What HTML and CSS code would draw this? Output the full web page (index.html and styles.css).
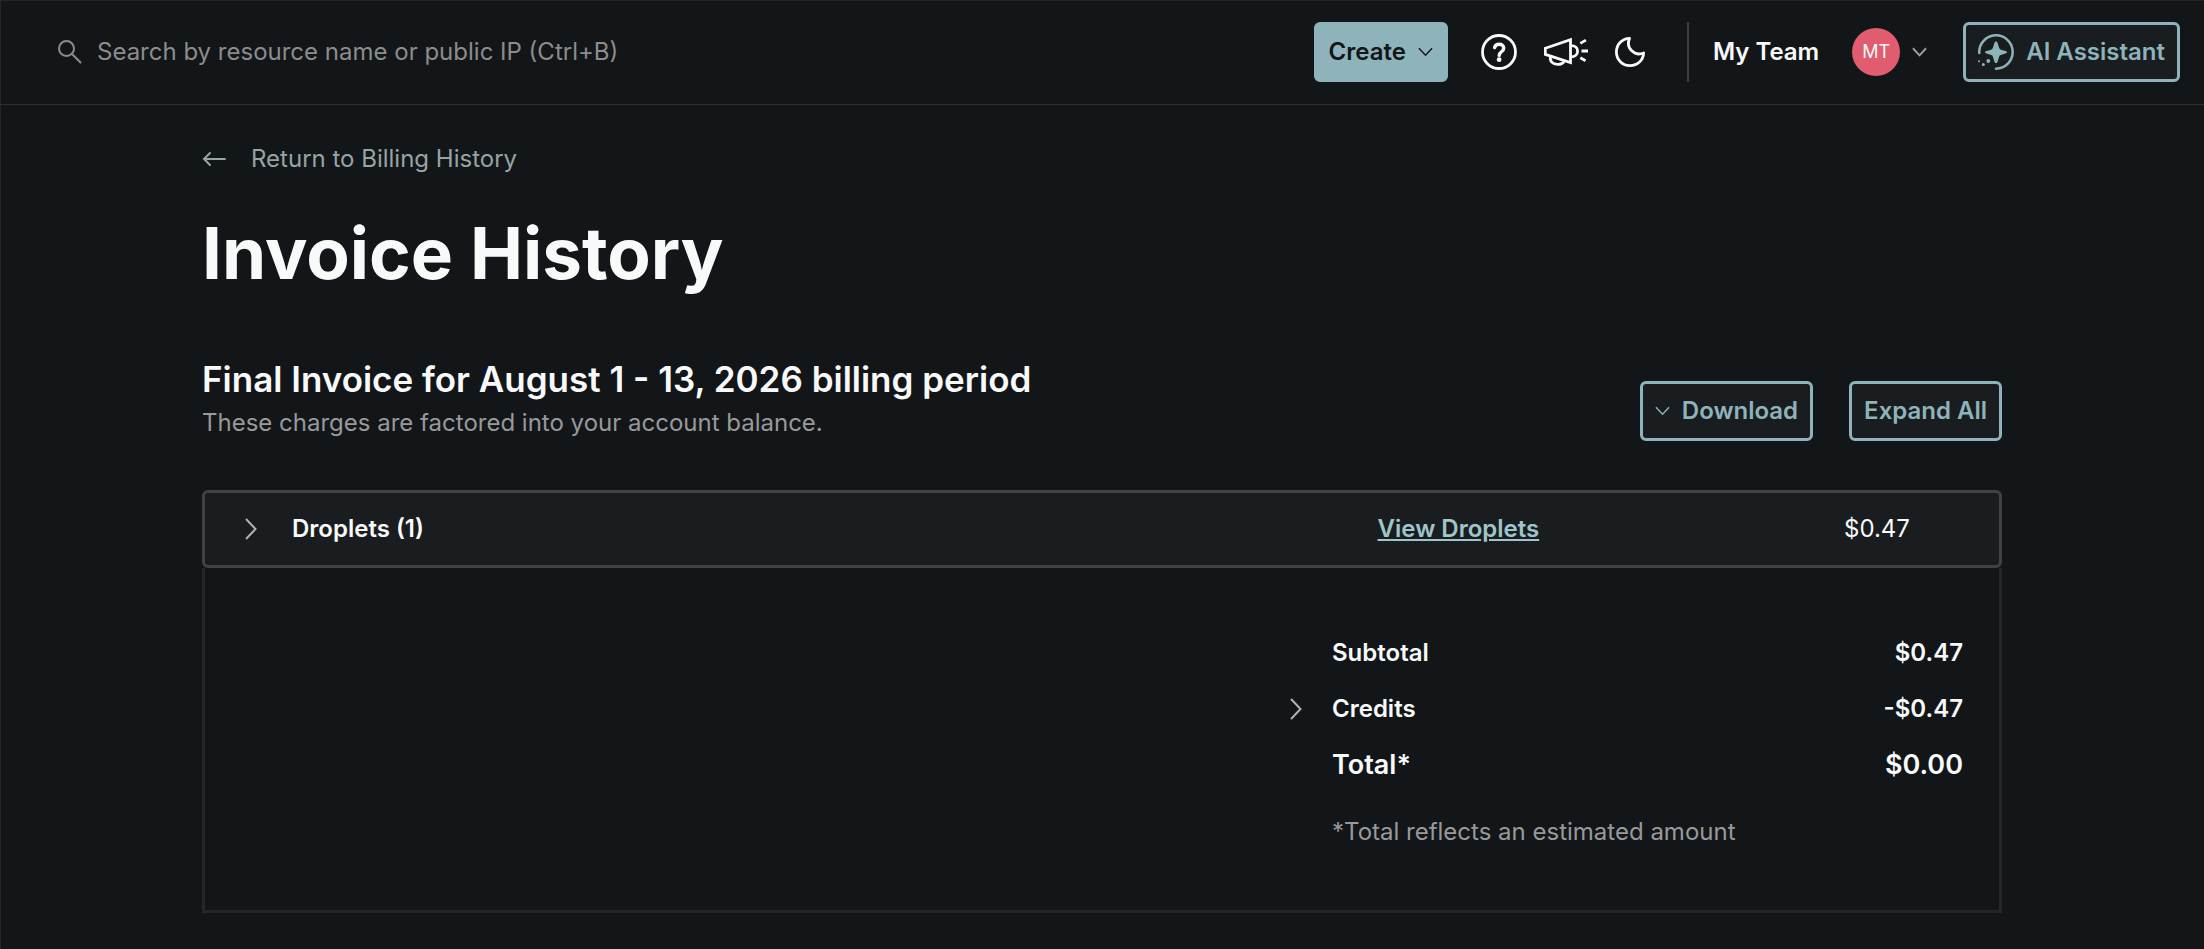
FILE: index.html
```html
<!DOCTYPE html>
<html lang="en">
<head>
    <meta charset="UTF-8">
    <meta name="viewport" content="width=device-width, initial-scale=1.0">
    <title>Invoice History</title>
    <link rel="stylesheet" href="styles.css">
</head>
<body>
    <header class="topbar">
        <form class="search">
            <label for="search" aria-label="Search">
                <svg class="search-icon" viewBox="0 0 24 24"><circle cx="8.500" cy="8.500" r="7.500"/><path d="M14 14L22.500 22.500"/></svg>
            </label>
            <input type="text" id="search" placeholder="Search by resource name or public IP (Ctrl+B)">
        </form>

        <button class="btn btn-create">
            Create
            <svg class="chevron" viewBox="0 0 16 10"><path d="M1 1l7 7.5L15 1"/></svg>
        </button>

        <div class="tools">
            <button class="icon-btn" aria-label="Help">
                <svg class="icon-help" viewBox="0 0 36 36"><circle cx="18" cy="18" r="16.5"/><path class="mark" d="M13.6 13.6c.5-2.2 2.2-3.3 4.5-3.3 2.7 0 4.6 1.5 4.6 3.9 0 3.7-4.5 3.4-4.5 7.2"/><circle class="dot" cx="18.1" cy="25.7" r="2.4"/></svg>
            </button>
            <button class="icon-btn" aria-label="What's new">
                <svg class="icon-news" viewBox="0 0 44 30"><path d="M1.3 11.3L26.5 2.6V25.6L1.3 17.4z"/><path d="M27 8.6c4 0 6.6 2.2 6.6 5.6s-2.6 5.6-6.6 5.6"/><path d="M6.6 19.4c-1.4 4.6 2 8 7 8 3.2 0 5.7-1.4 6.7-3.6"/><path d="M36.3 6.4l5.600-3.3M37.5 14h6.5M36.3 20.7l5.2 3"/></svg>
            </button>
            <button class="icon-btn" aria-label="Dark mode">
                <svg class="icon-moon" viewBox="0 0 30 30"><path d="M14.5 1.4C6.8 1.6 1.4 7.8 1.4 15c0 7.6 6 13.6 13.6 13.6 7.4 0 13.3-5.2 13.6-12.6-8.6 3.6-18.3-4.6-14.1-14.6z"/></svg>
            </button>
        </div>

        <div class="account">
            <span class="team">My Team</span>
            <button class="account-btn" aria-label="Account menu">
                <span class="avatar">MT</span>
                <svg class="chevron" viewBox="0 0 16 10"><path d="M1 1l7 7.5L15 1"/></svg>
            </button>
        </div>

        <button class="btn btn-outline btn-ai">
            <svg class="icon-ai" viewBox="0 0 36 36"><path class="ring" d="M1.3 19A16.7 16.7 0 1 1 18 34.7"/><path class="shape" d="M18 7.5c.9 0 1.3.6 1.6 1.6l1.6 5c.3.9.7 1.3 1.6 1.6l4.600 1.3c1 .3 1.5.6 1.5 1.3s-.5 1-1.5 1.3l-4.6 1.3c-.9.3-1.3.7-1.6 1.6l-1.6 5c-.3 1-.7 1.6-1.6 1.6s-1.3-.6-1.6-1.6l-1.6-5c-.3-.9-.7-1.3-1.6-1.6l-4.6-1.3c-1-.3-1.5-.6-1.5-1.3s.5-1 1.5-1.3l4.6-1.3c.9-.3 1.3-.7 1.6-1.6l1.6-5c.3-1 .7-1.6 1.6-1.6z"/><circle class="shape" cx="10.3" cy="27" r="1.9"/><circle class="shape" cx="5.3" cy="30.5" r="1.5"/><circle class="shape" cx="1" cy="27.3" r="1"/></svg>
            AI Assistant
        </button>
    </header>

    <main class="container">
        <a href="#" class="back">
            <svg class="arrow" viewBox="0 0 25 16"><path d="M23 8H2M8 2L2 8l6 6"/></svg>
            Return to Billing History
        </a>
        <h1>Invoice History</h1>

        <div class="invoice-head">
            <div>
                <h2>Final Invoice for August 1 - 13, 2026 billing period</h2>
                <p class="muted">These charges are factored into your account balance.</p>
            </div>
            <div class="actions">
                <button class="btn btn-outline">
                    <svg class="chevron" viewBox="0 0 16 10"><path d="M1 1l7 7.5L15 1"/></svg>
                    Download
                </button>
                <button class="btn btn-outline">Expand All</button>
            </div>
        </div>

        <table class="items">
            <tr>
                <td class="col-toggle">
                    <button class="toggle" aria-label="Show Droplets charges">
                        <svg class="chevron-right" viewBox="0 0 12 22"><path d="M1 1l9.5 10L1 21"/></svg>
                    </button>
                </td>
                <th scope="row">Droplets (1)</th>
                <td class="col-link"><a href="#">View Droplets</a></td>
                <td class="col-amount">$0.47</td>
            </tr>
        </table>

        <div class="summary">
            <table class="totals">
                <tr>
                    <td class="col-credit"></td>
                    <th scope="row">Subtotal</th>
                    <td>$0.47</td>
                </tr>
                <tr>
                    <td class="col-credit">
                        <button class="toggle" aria-label="Show credits">
                            <svg class="chevron-right" viewBox="0 0 12 22"><path d="M1 1l9.5 10L1 21"/></svg>
                        </button>
                    </td>
                    <th scope="row">Credits</th>
                    <td>-$0.47</td>
                </tr>
                <tr class="total">
                    <td class="col-credit"></td>
                    <th scope="row">Total*</th>
                    <td>$0.00</td>
                </tr>
            </table>
            <p class="muted note">*Total reflects an estimated amount</p>
        </div>
    </main>
</body>
</html>
```
FILE: styles.css
```css
* {
    box-sizing: border-box;
}

body {
    font-family: Inter, "Liberation Sans", sans-serif;
    font-size: 24px;
    line-height: 36px;
    background-color: #121619;
    color: #f8f9f9;
    margin: 0;
    min-height: 100vh;
    box-shadow: inset 1px 1px #23272a;
}

h1, h2, p {
    margin: 0;
}

svg {
    display: block;
    flex: none;
    fill: none;
    stroke: currentColor;
    stroke-width: 2;
}

button {
    font: inherit;
    color: inherit;
    background: none;
    border: none;
    padding: 0;
    cursor: pointer;
}

/* Top bar */
.topbar {
    display: flex;
    align-items: center;
    height: 105px;
    padding: 0 24px 0 58px;
    border-bottom: 1px solid #2c2f32;
}

.search {
    display: flex;
    align-items: center;
    gap: 15px;
    flex: 1;
    color: #8c8c8c;
}

.search input {
    flex: 1;
    font: inherit;
    color: #f8f9f9;
    background: none;
    border: none;
    outline: none;
    padding: 0;
}

.search input::placeholder {
    color: #8c8c8c;
    opacity: 1;
}

.search-icon {
    width: 24px;
    height: 24px;
    stroke-linecap: round;
}

.btn {
    display: flex;
    align-items: center;
    gap: 12px;
    height: 60px;
    padding: 0 12px;
    border: 3px solid #8fb3ba;
    border-radius: 6px;
    font-weight: 600;
    white-space: nowrap;
}

.btn-create {
    background-color: #8fb3ba;
    color: #121619;
}

.btn-outline {
    background-color: #191d1f;
    color: #8fb3ba;
}

.chevron {
    width: 15px;
    height: 10px;
}

.btn .chevron {
    stroke-width: 1.5;
}

.tools {
    display: flex;
    align-items: center;
    gap: 27px;
    padding: 0 42px 0 33px;
}

.icon-btn svg {
    stroke-width: 2.8;
}

.icon-help {
    width: 36px;
    height: 36px;
}

.mark {
    stroke-width: 3.4;
    stroke-linecap: round;
}

.dot {
    fill: currentColor;
    stroke: none;
}

.icon-news {
    width: 44px;
    height: 30px;
}

.icon-moon {
    width: 30px;
    height: 30px;
    stroke-linejoin: round;
}

.account {
    display: flex;
    align-items: center;
    gap: 33px;
    height: 60px;
    padding: 0 36px 0 24px;
    border-left: 2px solid #3d4043;
}

.team {
    font-weight: 600;
}

.account-btn {
    display: flex;
    align-items: center;
    gap: 12px;
    color: #a0a0a0;
}

.avatar {
    width: 48px;
    height: 48px;
    border-radius: 50%;
    background-color: #e05c6e;
    color: #f8f9f9;
    font-size: 18px;
    line-height: 48px;
}

.icon-ai {
    width: 36px;
    height: 36px;
}

.ring {
    stroke-width: 2.5;
    stroke-linecap: round;
}

.shape {
    fill: currentColor;
    stroke: none;
}

/* Page */
.container {
    max-width: 1800px;
    margin: 0 auto;
    padding: 36px 0;
}

.back {
    display: inline-flex;
    align-items: center;
    gap: 24px;
    color: #98a3a3;
    text-decoration: none;
}

.arrow {
    width: 25px;
    height: 16px;
    stroke-linecap: round;
}

h1 {
    margin: 28px 0 52px;
    font-size: 71px;
    line-height: 96px;
    font-weight: 700;
}

h2 {
    font-size: 35px;
    line-height: 52px;
    font-weight: 600;
}

.muted {
    color: #999;
}

.invoice-head {
    display: flex;
    justify-content: space-between;
    align-items: flex-end;
}

.actions {
    display: flex;
    gap: 36px;
}

.items {
    width: 100%;
    table-layout: fixed;
    border-spacing: 0;
    margin-top: 49px;
    background-color: #191d1f;
    border: 3px solid #404346;
    border-radius: 6px;
}

.items td, .items th {
    height: 72px;
    padding: 0;
    text-align: left;
}

.items .col-toggle {
    width: 87px;
    padding-left: 40px;
}

.items .col-link {
    width: 26%;
}

.items .col-amount {
    width: 155px;
}

th, .items a {
    font-weight: 600;
}

.items a {
    color: #9fc5cb;
}

.toggle {
    display: block;
    color: #b0b0b0;
}

.chevron-right {
    width: 12px;
    height: 22px;
}

.summary {
    padding: 57px 36px 60px;
    border: 3px solid #242629;
    border-top: none;
}

.totals {
    width: 673px;
    margin-left: auto;
    border-spacing: 0;
}

.totals td, .totals th {
    padding: 10px 0;
    text-align: left;
}

.totals td {
    font-weight: 600;
    text-align: right;
}

.totals .col-credit {
    width: 42px;
}

.total {
    font-size: 27px;
}

.note {
    width: 631px;
    margin: 21px 0 0 auto;
}
```
